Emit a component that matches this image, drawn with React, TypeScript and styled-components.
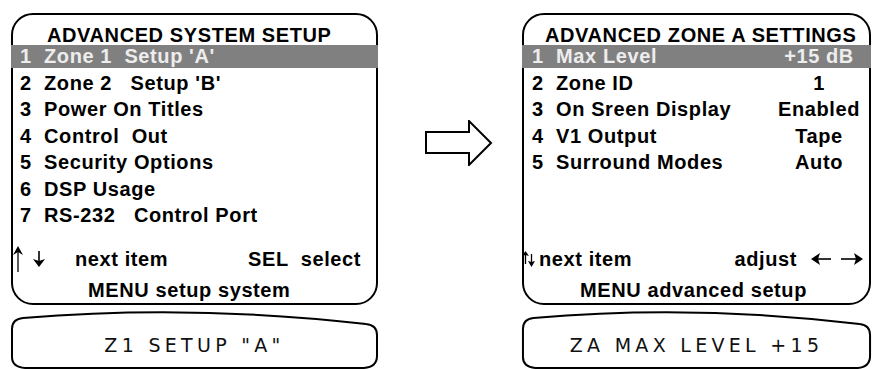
import React from "react";
import styled, { createGlobalStyle } from "styled-components";

const Global = createGlobalStyle`
  html, body { margin: 0; padding: 0; background: #fff; }
  body { font-family: "Liberation Sans", Arial, sans-serif; }
`;

const Page = styled.div`
  display: flex;
  align-items: flex-start;
  width: 873px;
  height: 369px;
  box-sizing: border-box;
  padding: 13px 0 0 11px;
  overflow: hidden;
`;

const Column = styled.div<{ $w: number }>`
  width: ${(p) => p.$w}px;
  display: flex;
  flex-direction: column;
  gap: 6px;
  flex: none;
`;

const Middle = styled.div`
  width: 144px;
  flex: none;
  box-sizing: border-box;
  padding: 107px 0 0 47px;
`;

const Panel = styled.div`
  height: 292px;
  box-sizing: border-box;
  border: 2px solid #000;
  border-radius: 22px;
  display: flex;
  flex-direction: column;
  padding: 10px 0 3px 0;
  font-weight: bold;
  font-size: 20px;
  letter-spacing: 0.6px;
  color: #000;
`;

const Title = styled.div<{ $pl: number }>`
  height: 20px;
  line-height: 20px;
  padding-left: ${(p) => p.$pl}px;
  white-space: pre;
`;

const List = styled.div`
  display: flex;
  flex-direction: column;
  gap: 3.5px;
`;

const Row = styled.div<{ $active?: boolean; $pl: number }>`
  height: 23px;
  line-height: 23px;
  white-space: pre;
  margin: 0 -2px;
  padding: 0 7px 0 ${(p) => p.$pl + 2}px;
  display: grid;
  grid-template-columns: 1fr 90px;
  background: ${(p) => (p.$active ? "#808080" : "transparent")};
  color: ${(p) => (p.$active ? "#ededed" : "#000")};
`;

const Value = styled.span`
  text-align: center;
`;

const Spacer = styled.div`
  flex: 1;
`;

const Footer = styled.div`
  display: flex;
  flex-direction: column;
  gap: 11px;
`;

const FootRow = styled.div<{ $pl?: number; $pr?: number }>`
  display: flex;
  align-items: center;
  height: 20px;
  line-height: 20px;
  white-space: pre;
  padding-left: ${(p) => p.$pl ?? 0}px;
  padding-right: ${(p) => p.$pr ?? 0}px;
`;

const Label = styled.span<{ $ml?: number; $auto?: boolean }>`
  margin-left: ${(p) => (p.$auto ? "auto" : `${p.$ml ?? 0}px`)};
`;

const Glyph = styled.svg<{ $ml?: number }>`
  flex: none;
  display: block;
  margin-left: ${(p) => p.$ml ?? 0}px;
`;

const Pill = styled.div`
  position: relative;
  height: 57px;
  box-sizing: border-box;
  padding-top: 23px;
  display: flex;
  justify-content: center;
  font-family: "DejaVu Sans", "Liberation Sans", sans-serif;
  font-size: 19px;
  line-height: 22px;
  letter-spacing: 4.3px;
  color: #111;
  white-space: pre;
`;

const PillShape = styled.svg`
  position: absolute;
  inset: 0;
  width: 100%;
  height: 100%;
  overflow: visible;
`;

const PillText = styled.span`
  position: relative;
`;

const PillOutline = () => (
  <PillShape viewBox="0 0 366 57" preserveAspectRatio="none">
    <path
      d="M1 18 Q1 8 12 7 Q180 -7 354 13 Q365 14 365 24 L365 45 Q365 56 352 57 L14 57 Q1 56 1 46 Z"
      fill="none"
      stroke="#000"
      strokeWidth="2"
      vectorEffect="non-scaling-stroke"
    />
  </PillShape>
);

const UpThin = () => (
  <Glyph width="12" height="26" viewBox="0 0 12 26" $ml={-1}>
    <line x1="6" y1="5" x2="6" y2="26" stroke="#000" strokeWidth="1.3" />
    <polygon points="1,9 6,0 11,9 6,6" fill="#000" />
  </Glyph>
);

const DownThick = () => (
  <Glyph width="12" height="16" viewBox="0 0 12 16" $ml={9}>
    <line x1="6" y1="0" x2="6" y2="11" stroke="#000" strokeWidth="1.6" />
    <polygon points="0,8 6,10 12,8 6,16" fill="#000" />
  </Glyph>
);

const UpDownSmall = () => (
  <Glyph width="13" height="16" viewBox="0 0 13 16" $ml={-2}>
    <line x1="3.5" y1="3" x2="3.5" y2="13" stroke="#000" strokeWidth="1.3" />
    <polygon points="0,5 3.5,0 7,5 3.5,4" fill="#000" />
    <line x1="9.5" y1="3" x2="9.5" y2="12" stroke="#000" strokeWidth="1.3" />
    <polygon points="6,10 9.5,11 13,10 9.5,16" fill="#000" />
  </Glyph>
);

const LeftRight = () => (
  <Glyph width="52" height="14" viewBox="0 0 52 14" $ml={14}>
    <line x1="4" y1="7" x2="20" y2="7" stroke="#000" strokeWidth="1.6" />
    <polygon points="0,7 9,1 7,7 9,13" fill="#000" />
    <line x1="30" y1="7" x2="47" y2="7" stroke="#000" strokeWidth="1.6" />
    <polygon points="52,7 43,1 45,7 43,13" fill="#000" />
  </Glyph>
);

const BigArrow = () => (
  <svg width="68" height="46" viewBox="0 0 68 46" style={{ display: "block" }}>
    <polygon
      points="1,12 44,12 44,1 66,23 44,45 44,33 1,33"
      fill="#fff"
      stroke="#000"
      strokeWidth="2"
      strokeLinejoin="miter"
    />
  </svg>
);

const leftItems = [
  "1  Zone 1  Setup 'A'",
  "2  Zone 2   Setup 'B'",
  "3  Power On Titles",
  "4  Control  Out",
  "5  Security Options",
  "6  DSP Usage",
  "7  RS-232   Control Port",
];

const rightItems: [string, string][] = [
  ["1  Max Level", "+15 dB"],
  ["2  Zone ID", "1"],
  ["3  On Sreen Display", "Enabled"],
  ["4  V1 Output", "Tape"],
  ["5  Surround Modes", "Auto"],
];

export default function App() {
  return (
    <>
      <Global />
      <Page>
        <Column $w={367}>
          <Panel>
            <Title $pl={34}>ADVANCED SYSTEM SETUP</Title>
            <List>
              {leftItems.map((t, i) => (
                <Row key={t} $pl={7} $active={i === 0}>
                  <span>{t}</span>
                </Row>
              ))}
            </List>
            <Spacer />
            <Footer>
              <FootRow $pr={15}>
                <UpThin />
                <DownThick />
                <Label $ml={30}>next item</Label>
                <Label $auto>SEL  select</Label>
              </FootRow>
              <FootRow $pl={75}>MENU setup system</FootRow>
            </Footer>
          </Panel>
          <Pill>
            <PillOutline />
            <PillText>Z1 SETUP "A"</PillText>
          </Pill>
        </Column>
        <Middle>
          <BigArrow />
        </Middle>
        <Column $w={349}>
          <Panel>
            <Title $pl={21}>ADVANCED ZONE A SETTINGS</Title>
            <List>
              {rightItems.map(([l, v], i) => (
                <Row key={l} $pl={8} $active={i === 0}>
                  <span>{l}</span>
                  <Value>{v}</Value>
                </Row>
              ))}
            </List>
            <Spacer />
            <Footer>
              <FootRow $pr={6}>
                <UpDownSmall />
                <Label $ml={4}>next item</Label>
                <Label $auto>adjust</Label>
                <LeftRight />
              </FootRow>
              <FootRow $pl={56}>MENU advanced setup</FootRow>
            </Footer>
          </Panel>
          <Pill>
            <PillOutline />
            <PillText>ZA MAX LEVEL +15</PillText>
          </Pill>
        </Column>
      </Page>
    </>
  );
}
